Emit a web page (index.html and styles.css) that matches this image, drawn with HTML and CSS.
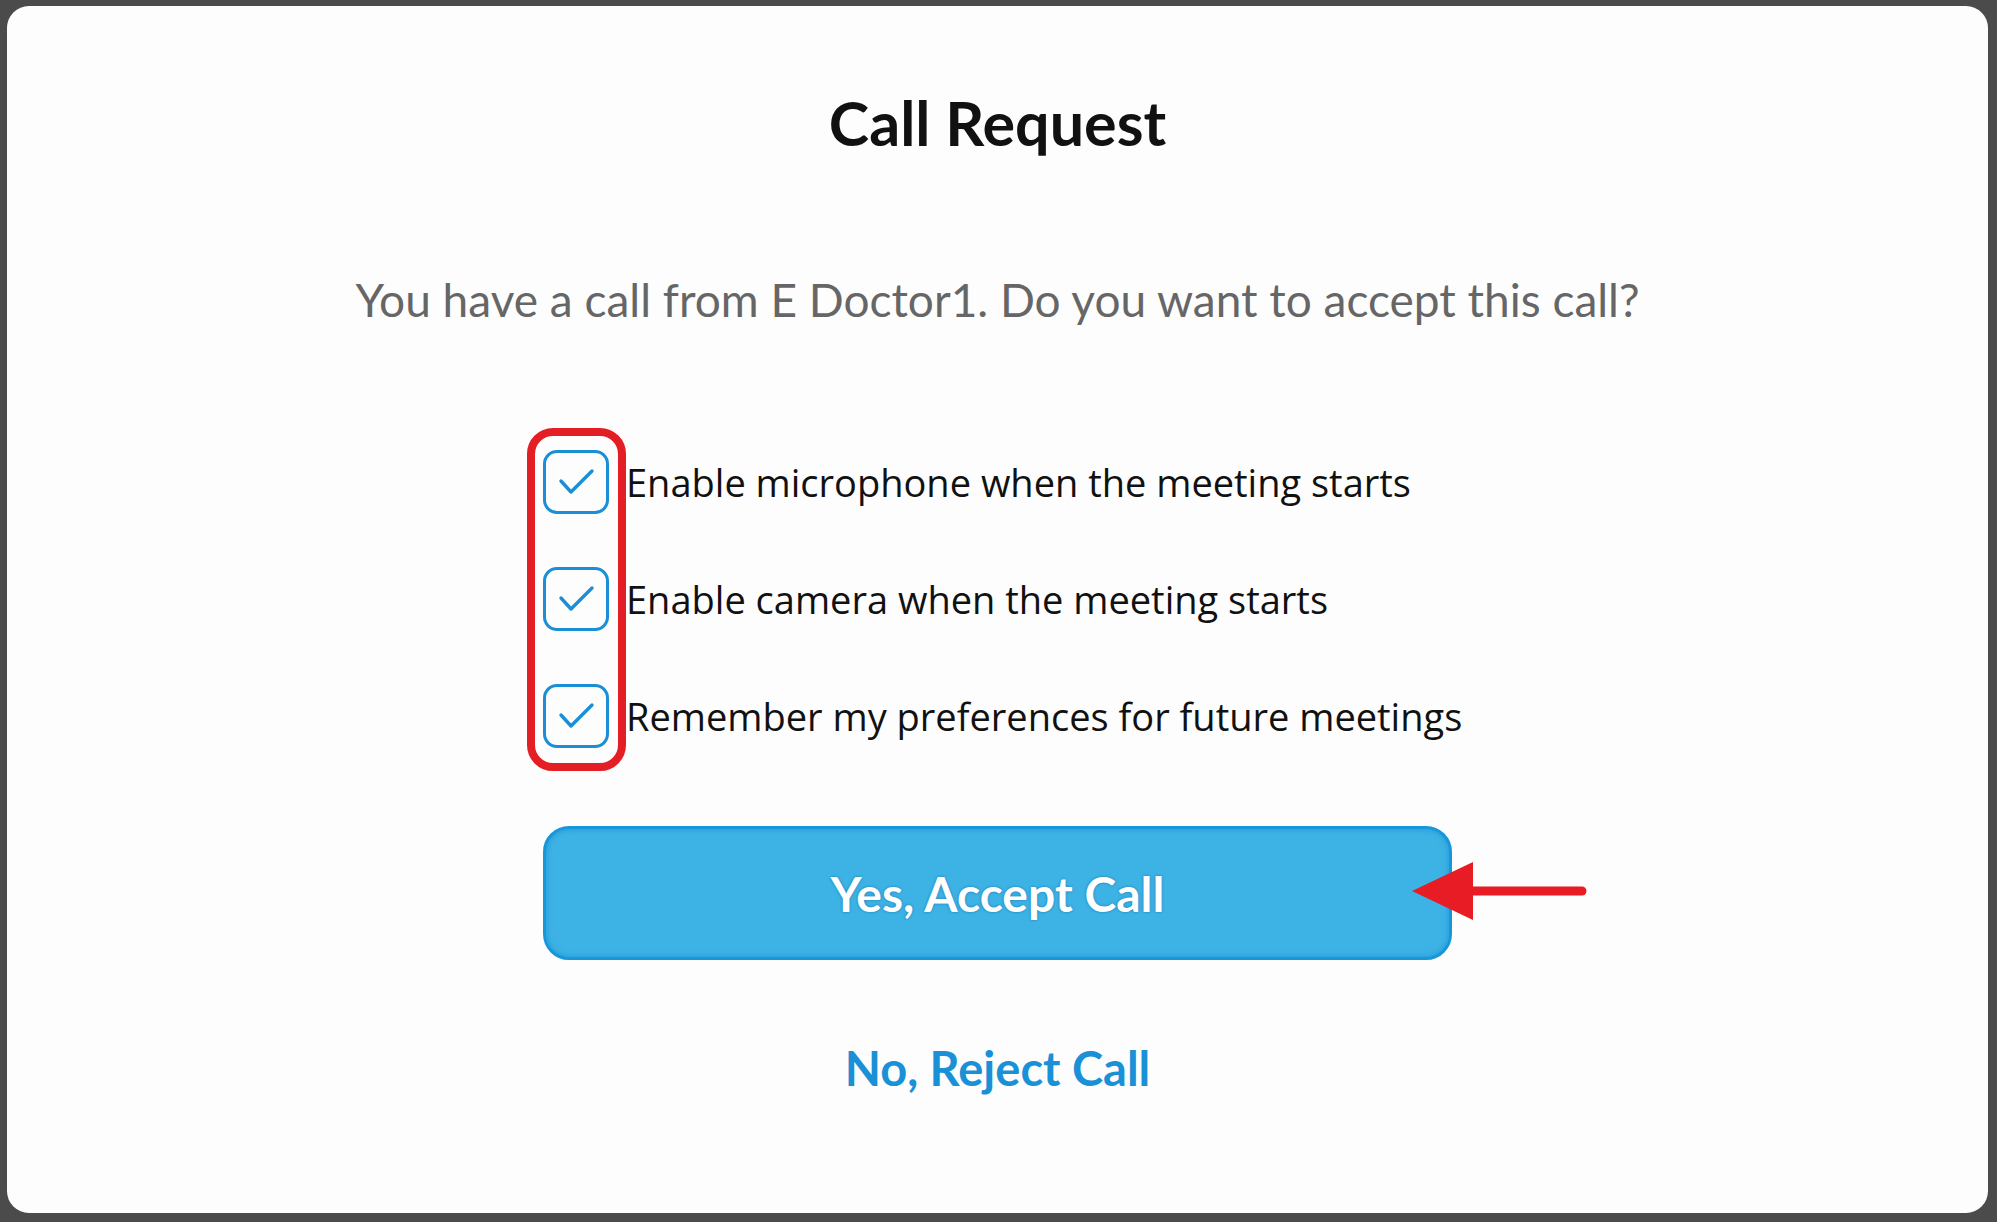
FILE: index.html
```html
<!DOCTYPE html>
<html lang="en">
<head>
<meta charset="utf-8">
<title>Call Request</title>
<link rel="stylesheet" href="styles.css">
</head>
<body>
<div class="modal">
  <h1 class="title">Call Request</h1>
  <p class="subtitle">You have a call from E Doctor1. Do you want to accept this call?</p>
  <div class="panel">
    <div class="options">
      <div class="highlight"></div>
      <label class="option">
        <span class="box"><svg viewBox="0 0 66 64" width="66" height="64"><path d="M18 31 L28 42 L49 21" /></svg></span>
        <span class="label">Enable microphone when the meeting starts</span>
      </label>
      <label class="option">
        <span class="box"><svg viewBox="0 0 66 64" width="66" height="64"><path d="M18 31 L28 42 L49 21" /></svg></span>
        <span class="label">Enable camera when the meeting starts</span>
      </label>
      <label class="option">
        <span class="box"><svg viewBox="0 0 66 64" width="66" height="64"><path d="M18 31 L28 42 L49 21" /></svg></span>
        <span class="label">Remember my preferences for future meetings</span>
      </label>
    </div>
    <div class="accept-wrap">
      <button class="accept">Yes, Accept Call</button>
      <svg class="arrow" viewBox="0 0 175 58" width="175" height="58">
        <path class="arrow-shaft" d="M58 29 H170" />
        <path class="arrow-head" d="M0 29 L61 0 L61 58 Z" />
      </svg>
    </div>
  </div>
  <a class="reject" href="#">No, Reject Call</a>
</div>
</body>
</html>
```

FILE: styles.css
```css
* { box-sizing: border-box; }

html, body {
  margin: 0;
  height: 1222px;
}

body {
  background: #4b4b4b;
  padding: 6px 9px 9px 7px;
  font-family: "Open Sans", "Liberation Sans", sans-serif;
}

.modal {
  height: 100%;
  background: #fdfdfd;
  border-radius: 22px;
  display: flex;
  flex-direction: column;
  align-items: center;
}

.title {
  margin: 83px 0 0;
  font-family: "Lato", "Open Sans", sans-serif;
  font-weight: 700;
  font-size: 61px;
  line-height: 68px;
  color: #111;
}

.subtitle {
  margin: 116px 0 0;
  font-family: "Lato", "Open Sans", sans-serif;
  font-weight: 400;
  font-size: 46px;
  line-height: 54px;
  color: #666;
}

.panel {
  width: 909px;
  margin-top: 123px;
  display: flex;
  flex-direction: column;
}

.options {
  position: relative;
  display: flex;
  flex-direction: column;
  gap: 53px;
}

.highlight {
  position: absolute;
  left: -16px;
  top: -22px;
  width: 99px;
  height: 343px;
  border: 8px solid #e31e24;
  border-radius: 26px;
}

.option {
  display: flex;
  align-items: center;
  gap: 17px;
}

.box {
  width: 66px;
  height: 64px;
  flex: none;
  border: 3.5px solid #1a8fd6;
  border-radius: 14px;
  position: relative;
}

.box svg {
  position: absolute;
  left: -3.5px;
  top: -3.5px;
}

.box path {
  fill: none;
  stroke: #1a8fd6;
  stroke-width: 3.4;
  stroke-linecap: round;
  stroke-linejoin: round;
}

.label {
  font-family: "Open Sans", sans-serif;
  font-size: 38px;
  color: #111;
  line-height: 50px;
  white-space: nowrap;
}

.accept-wrap {
  position: relative;
  margin-top: 78px;
}

.accept {
  width: 909px;
  height: 134px;
  border: 3px solid #1796da;
  border-radius: 26px;
  background: #3db3e5;
  box-shadow: inset 0 0 6px rgba(10, 120, 200, 0.5);
  color: #fff;
  font-family: "Lato", "Open Sans", sans-serif;
  font-weight: 700;
  font-size: 48px;
  text-shadow: 0 0 3px rgba(10, 80, 150, 0.6);
  display: flex;
  align-items: center;
  justify-content: center;
  padding: 0;
}

.arrow {
  position: absolute;
  left: 869px;
  top: 36px;
}

.arrow-shaft {
  stroke: #e81c24;
  stroke-width: 9;
  stroke-linecap: round;
}

.arrow-head {
  fill: #e81c24;
}

.reject {
  margin-top: 81px;
  font-family: "Lato", "Open Sans", sans-serif;
  font-weight: 700;
  font-size: 47px;
  line-height: 54px;
  color: #1a90d6;
  text-decoration: none;
}
```
